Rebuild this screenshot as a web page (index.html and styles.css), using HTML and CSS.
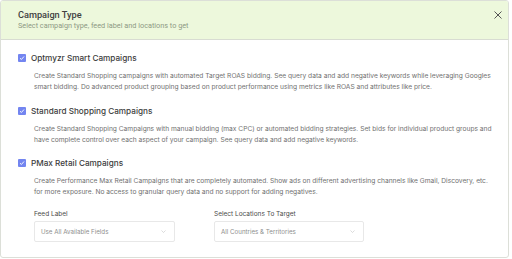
FILE: index.html
```html
<!DOCTYPE html>
<html>
  <head>
    <meta name="viewport" content="width=device-width, initial-scale=1.0">
    <link rel="stylesheet" href="styles.css">
  </head>
  <body>
    <div class="modal">
      <div class="modal-header">
        <div>
          <div class="modal-title">Campaign Type</div>
          <div class="modal-subtitle">Select campaign type, feed label and locations to get</div>
        </div>
        <svg class="close" width="10" height="10" viewBox="0 0 10 10">
          <path d="M1.5 1.5 L8.5 8.5 M8.5 1.5 L1.5 8.5" stroke="#555" stroke-width="1" fill="none"/>
        </svg>
      </div>

      <div class="modal-body">
        <div class="option">
          <div class="option-head">
            <span class="check">
              <svg width="6" height="6" viewBox="0 0 6 6"><path d="M1 3.2 L2.4 4.5 L5 1.5" stroke="#fff" stroke-width="0.9" fill="none"/></svg>
            </span>
            <span class="option-label">Optmyzr Smart Campaigns</span>
          </div>
          <p class="option-desc">Create Standard Shopping campaigns with automated Target ROAS bidding. See query data and add negative keywords while leveraging Googles smart bidding. Do advanced product grouping based on product performance using metrics like ROAS and attributes like price.</p>
        </div>

        <div class="option">
          <div class="option-head">
            <span class="check">
              <svg width="6" height="6" viewBox="0 0 6 6"><path d="M1 3.2 L2.4 4.5 L5 1.5" stroke="#fff" stroke-width="0.9" fill="none"/></svg>
            </span>
            <span class="option-label">Standard Shopping Campaigns</span>
          </div>
          <p class="option-desc">Create Standard Shopping Campaigns with manual bidding (max CPC) or automated bidding strategies. Set bids for individual product groups and have complete control over each aspect of your campaign. See query data and add negative keywords.</p>
        </div>

        <div class="option">
          <div class="option-head">
            <span class="check">
              <svg width="6" height="6" viewBox="0 0 6 6"><path d="M1 3.2 L2.4 4.5 L5 1.5" stroke="#fff" stroke-width="0.9" fill="none"/></svg>
            </span>
            <span class="option-label">PMax Retail Campaigns</span>
          </div>
          <p class="option-desc">Create Performance Max Retail Campaigns that are completely automated. Show ads on different advertising channels like Gmail, Discovery, etc. for more exposure. No access to granular query data and no support for adding negatives.</p>

          <div class="fields">
            <div class="field field-feed">
              <div class="field-label">Feed Label</div>
              <div class="select">
                <span>Use All Available Fields</span>
                <svg width="5" height="3" viewBox="0 0 5 3"><path d="M0.5 0.5 L2.5 2.5 L4.5 0.5" stroke="#c4c4c4" stroke-width="0.6" fill="none"/></svg>
              </div>
            </div>
            <div class="field field-loc">
              <div class="field-label">Select Locations To Target</div>
              <div class="select">
                <span>All Countries &amp; Territories</span>
                <svg width="5" height="3" viewBox="0 0 5 3"><path d="M0.5 0.5 L2.5 2.5 L4.5 0.5" stroke="#c4c4c4" stroke-width="0.6" fill="none"/></svg>
              </div>
            </div>
          </div>
        </div>
      </div>
    </div>
  </body>
</html>
```

FILE: styles.css
```css
/* Page */
body {
  margin: 0;
  background: #ffffff;
  font-family: Inter, "Noto Sans", sans-serif;
}

/* Modal box */
.modal {
  width: 509px;
  height: 258px;
  border: 1px solid #dcdfd8;
  border-radius: 3px;
  box-sizing: border-box;
  overflow: hidden;
  background: #ffffff;
}

.modal-header {
  background: #edf8dc;
  border-bottom: 1px solid #d8dcd2;
  height: 39px;
  box-sizing: border-box;
  padding: 8px 5px 0 17px;
  display: flex;
  justify-content: space-between;
  align-items: flex-start;
}

.modal-title {
  font-family: Roboto, sans-serif;
  font-size: 9.2px;
  font-weight: 500;
  color: #404040;
  line-height: 12px;
}

.modal-subtitle {
  font-family: Roboto, sans-serif;
  font-size: 7.3px;
  color: #8d9a84;
  line-height: 10px;
}

.close {
  margin-top: 1px;
}

/* Body */
.modal-body {
  padding: 12px 13px 0 17px;
}

.option {
  margin-bottom: 11.5px;
}

.option-head {
  display: flex;
  align-items: center;
  height: 12px;
}

.check {
  width: 8px;
  height: 8px;
  border-radius: 1px;
  background: #7385f0;
  display: flex;
  align-items: center;
  justify-content: center;
  margin-right: 5px;
}

.option-label {
  font-size: 8.2px;
  font-weight: 500;
  color: #3c3c3c;
}

.option-desc {
  margin: 7px 0 0 16px;
  font-size: 6.65px;
  line-height: 11px;
  color: #707070;
}

/* Feed label and location fields */
.fields {
  display: flex;
  gap: 39px;
  margin: 12px 0 0 16px;
}

.field-label {
  font-size: 6.5px;
  line-height: 9px;
  color: #4a4a4a;
  margin-bottom: 2px;
}

.field-feed .select {
  width: 141px;
}

.field-loc .select {
  width: 150px;
}

.select {
  height: 21px;
  box-sizing: border-box;
  border: 1px solid #e8e8e8;
  border-radius: 2px;
  padding: 0 8px 0 6px;
  display: flex;
  align-items: center;
  justify-content: space-between;
  font-size: 6.2px;
  color: #8e8e8e;
}
```
